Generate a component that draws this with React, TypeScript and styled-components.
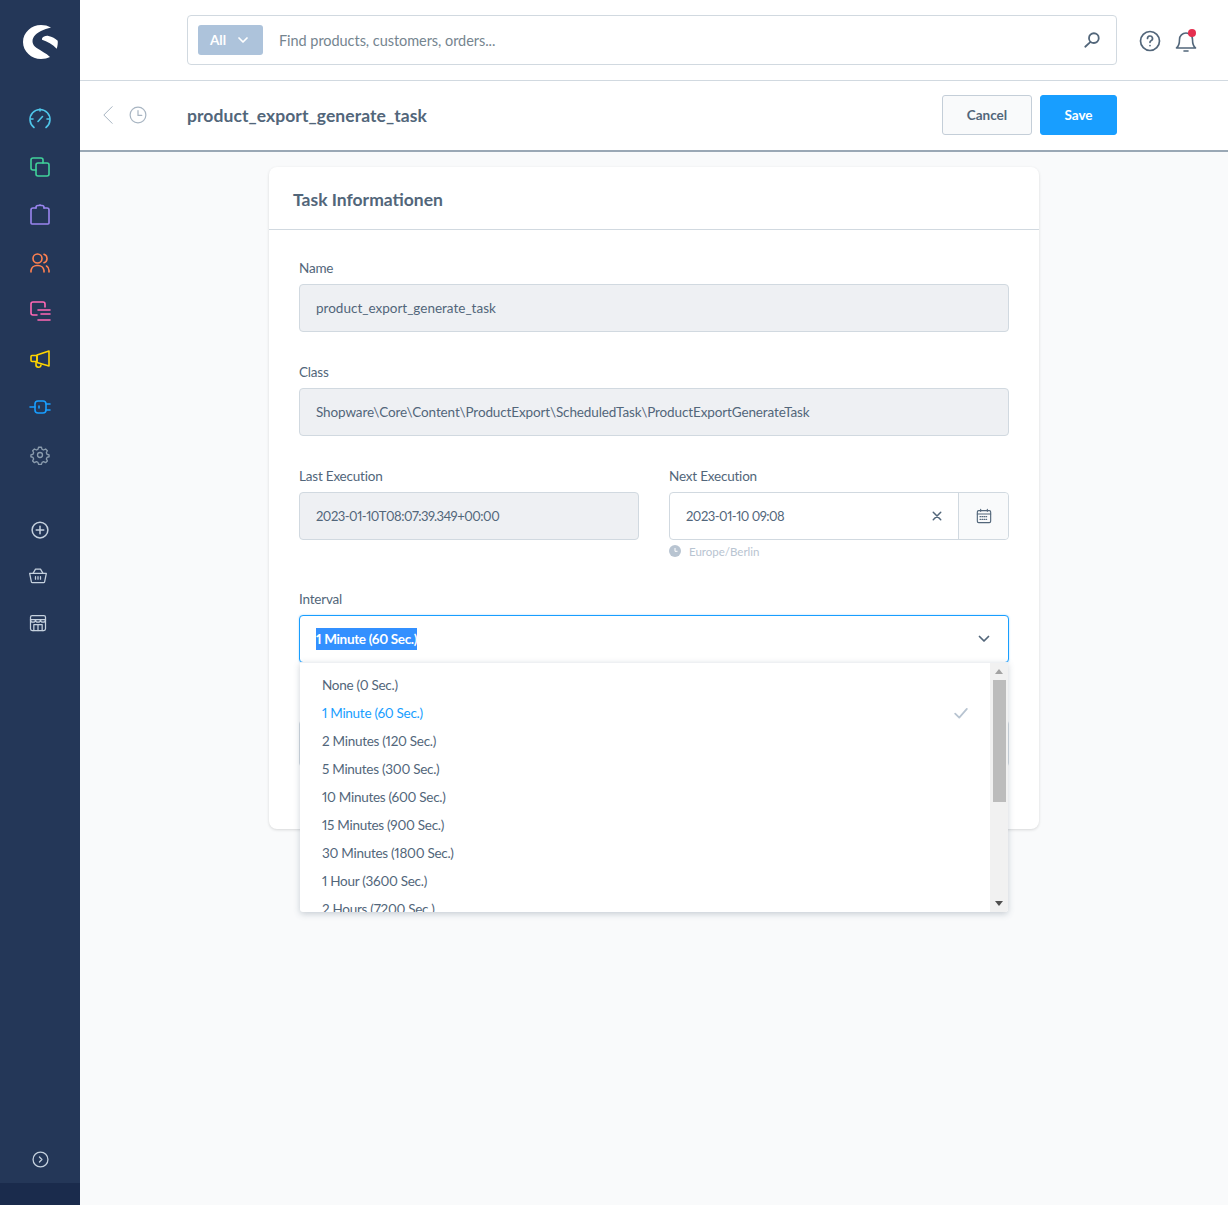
import React from 'react';
import styled, {createGlobalStyle} from 'styled-components';

const GlobalStyle = createGlobalStyle`
  html, body {
    margin: 0;
    padding: 0;
    height: 100%;
  }

  body {
    background: #f9fafb;
    font-family: Lato, "Noto Sans", sans-serif;
    font-variant-numeric: proportional-nums;
    color: #52667a;
  }

  * {
    box-sizing: border-box;
  }
`;

const Page = styled.div`
  display: flex;
  width: 1228px;
  height: 1205px;
  overflow: hidden;
`;

const Sidebar = styled.aside`
  display: flex;
  flex-direction: column;
  flex: 0 0 80px;
  width: 80px;
  background: #243758;
`;

const LogoWrap = styled.div`
  display: flex;
  justify-content: center;
  align-items: center;
  height: 83px;
`;

const NavMain = styled.nav`
  display: flex;
  flex-direction: column;
  align-items: center;
  padding-top: 12px;
`;

const NavItem = styled.div<{$color:string, $height?:number, $shift?:number}>`
  display: flex;
  justify-content: center;
  align-items: center;
  width: 80px;
  height: ${props => props.$height ?? 48}px;
  padding-right: ${props => props.$shift ?? 0}px;
  color: ${props => props.$color};
`;

const NavExtra = styled.nav`
  display: flex;
  flex-direction: column;
  align-items: center;
  padding-top: 30px;
`;

const SideFoot = styled.div`
  display: flex;
  justify-content: center;
  align-items: center;
  margin-top: auto;
  height: 48px;
  color: #c5d1de;
`;

const SideBottom = styled.div`
  height: 22px;
  background: #1a2b4c;
`;

const Main = styled.main`
  display: flex;
  flex-direction: column;
  flex: 1;
  min-width: 0;
`;

const TopBar = styled.header`
  display: flex;
  align-items: center;
  height: 81px;
  padding-left: 107px;
  background: #fff;
  border-bottom: 1px solid #d1d9e0;
`;

const SearchBox = styled.div`
  display: flex;
  align-items: center;
  width: 930px;
  height: 50px;
  padding: 0 15px 0 10px;
  border: 1px solid #d1d9e0;
  border-radius: 4px;
  color: #52667a;
`;

const TypeButton = styled.div`
  display: flex;
  align-items: center;
  justify-content: space-between;
  width: 65px;
  height: 30px;
  padding: 0 14px 0 12px;
  background: #adc3db;
  border-radius: 3px;
  color: #fff;
  font-size: 13.5px;
  font-weight: 700;
`;

const SearchPlaceholder = styled.span`
  flex: 1;
  margin-left: 16px;
  font-size: 14.5px;
  letter-spacing: -0.05px;
  color: #75858f;
`;

const TopIcons = styled.div`
  display: flex;
  align-items: center;
  gap: 12px;
  margin-left: 21px;
  padding-top: 1px;
  color: #52667a;
`;

const BellWrap = styled.div`
  position: relative;
  display: flex;
`;

const BellDot = styled.span`
  position: absolute;
  top: 0;
  right: 2px;
  width: 8px;
  height: 8px;
  border-radius: 50%;
  background: #e52f4f;
`;

const SmartBar = styled.div`
  display: flex;
  align-items: center;
  height: 71px;
  padding: 0 111px 1px 18px;
  background: #fff;
  border-bottom: 2px solid #9aa8b5;
`;

const BackIcons = styled.div`
  display: flex;
  align-items: center;
  gap: 11px;
  width: 89px;
  color: #a8b5c2;
`;

const Title = styled.h1`
  flex: 1;
  margin: 0;
  font-size: 17.5px;
  font-weight: 700;
  letter-spacing: 0.07px;
  color: #52667a;
`;

const Actions = styled.div`
  display: flex;
  gap: 8px;
`;

const Button = styled.button<{$primary?:boolean}>`
  height: 40px;
  width: ${props => props.$primary ? '77px' : '90px'};
  border-radius: 3px;
  border: 1px solid ${props => props.$primary ? '#189eff' : '#c4ced8'};
  background: ${props => props.$primary ? '#189eff' : '#f9fafb'};
  color: ${props => props.$primary ? '#fff' : '#52667a'};
  font-family: inherit;
  font-size: 13.5px;
  font-weight: 700;
`;

const Content = styled.div`
  display: flex;
  justify-content: center;
  flex: 1;
  padding-top: 15px;
  background: #f9fafb;
`;

const Card = styled.section`
  width: 770px;
  height: 662px;
  background: #fff;
  border-radius: 8px;
  box-shadow: 0 1px 3px rgba(0, 0, 0, 0.14);
`;

const CardTitle = styled.h2`
  display: flex;
  align-items: center;
  height: 63px;
  margin: 0;
  padding: 3px 0 0 24px;
  border-bottom: 1px solid #d1d9e0;
  font-size: 17.5px;
  font-weight: 700;
  color: #52667a;
`;

const CardBody = styled.div`
  display: flex;
  flex-direction: column;
  padding: 30px 30px 0;
`;

const Field = styled.div`
  display: flex;
  flex-direction: column;
  position: relative;
  margin-bottom: 32px;
`;

const FieldRow = styled.div`
  display: grid;
  grid-template-columns: 340px 340px;
  gap: 30px;
`;

const Label = styled.label`
  height: 16px;
  margin-bottom: 8px;
  line-height: 16px;
  font-size: 13.5px;
  letter-spacing: -0.2px;
  color: #52667a;
`;

const InputBox = styled.div<{$disabled?:boolean, $spacing?:number}>`
  display: flex;
  align-items: center;
  height: 48px;
  padding: 0 0 1px 16px;
  border: 1px solid #d1d9e0;
  border-radius: 4px;
  background: ${props => props.$disabled ? '#eef0f3' : '#fff'};
  font-size: 13.5px;
  letter-spacing: ${props => props.$spacing ?? 0}px;
  color: #52667a;
`;

const DateText = styled.span`
  font-size: 13px;
  letter-spacing: -0.5px;
`;

const ClearButton = styled.span`
  display: flex;
  margin-left: auto;
  margin-right: 16px;
  color: #52667a;
`;

const CalendarAddon = styled.span`
  display: flex;
  justify-content: center;
  align-items: center;
  align-self: stretch;
  width: 50px;
  margin-bottom: -1px;
  background: #f9fafb;
  border-left: 1px solid #d1d9e0;
  border-radius: 0 4px 4px 0;
  color: #52667a;
`;

const Hint = styled.div`
  display: flex;
  align-items: center;
  gap: 8px;
  height: 12px;
  margin: 5px 0 2px;
  font-size: 11.5px;
  color: #b8c4d1;
`;

const SelectBox = styled(InputBox)`
  border-color: #189eff;
  justify-content: space-between;
  padding: 0 18px 0 16px;
  box-shadow: 0 0 2px rgba(24, 158, 255, 0.4);
`;

const SelectedText = styled.span`
  background: #3390ff;
  color: #fff;
  line-height: 22px;
  font-weight: 700;
  letter-spacing: -0.33px;
`;

const HiddenField = styled.div`
  height: 47px;
  margin-top: 57px;
  border: 1px solid #d1d9e0;
  border-radius: 4px;
  background: #fff;
`;

const Dropdown = styled.div`
  position: absolute;
  top: 71px;
  left: 1px;
  display: flex;
  width: 708px;
  height: 250px;
  background: #fff;
  border-top: 1px solid #eef0f3;
  border-radius: 0 0 3px 3px;
  box-shadow: 0 2px 6px rgba(82, 102, 122, 0.3);
  overflow: hidden;
`;

const OptionList = styled.ul`
  flex: 1;
  margin: 0;
  padding: 8px 0 0;
  list-style: none;
  overflow: hidden;
`;

const Option = styled.li<{$active?:boolean}>`
  display: flex;
  align-items: center;
  justify-content: space-between;
  height: 28px;
  padding: 0 22px;
  font-size: 13.5px;
  letter-spacing: -0.28px;
  color: ${props => props.$active ? '#189eff' : '#52667a'};
`;

const CheckMark = styled.span`
  display: flex;
  color: #b8c4d1;
`;

const ScrollTrack = styled.div`
  display: flex;
  flex-direction: column;
  align-items: center;
  flex: 0 0 18px;
  background: #f1f1f1;
`;

const ScrollArrow = styled.div<{$down?:boolean}>`
  display: flex;
  justify-content: center;
  align-items: center;
  flex: 0 0 17px;
  color: ${props => props.$down ? '#505050' : '#a3a3a3'};
`;

const ScrollThumb = styled.div`
  width: 13px;
  height: 122px;
  background: #bcbcbc;
`;

const ScrollSpacer = styled.div`
  flex: 1;
`;

const Svg = ({size = 24, w = 1.6, children}:{size?:number, w?:number, children:React.ReactNode}) =>
    <svg width={size} height={size} viewBox="0 0 24 24" fill="none" stroke="currentColor"
        strokeWidth={w} strokeLinecap="round" strokeLinejoin="round">
        {children}
    </svg>;

const navIcons:{color:string, size?:number, icon:React.ReactNode}[] = [
    {color: '#4fc6ea', icon: <><path d="M6 20.5a10 10 0 1 1 12 0"/><path d="M10 14.5l4.5-5"/><path d="M12 2v2M3 12h2M19 12h2"/></>},
    {color: '#40d29a', icon: <><rect x="8" y="8" width="13" height="13" rx="2"/><path d="M8 15H5a2 2 0 0 1-2-2V5a2 2 0 0 1 2-2h8a2 2 0 0 1 2 2v3"/></>},
    {color: '#9a85f0', icon: <><path d="M8 5H5a2 2 0 0 0-2 2v13a1 1 0 0 0 1 1h16a1 1 0 0 0 1-1V7a2 2 0 0 0-2-2h-3"/><path d="M8 5V4.500a2 2 0 0 1 2-2h1l1-.5 1 .5h1a2 2 0 0 1 2 2V5"/></>},
    {color: '#ff8150', icon: <><circle cx="9.500" cy="7.500" r="4.500"/><path d="M3 21v-1.500a6 6 0 0 1 6-5h1a6 6 0 0 1 6 5V21"/><path d="M16 3.200a4.500 4.500 0 0 1 0 8.500M21 21v-1.500c0-2-1-3.600-2.500-4.500"/></>},
    {color: '#ff68b4', icon: <><path d="M9 16H5a2 2 0 0 1-2-2V5a2 2 0 0 1 2-2h10a2 2 0 0 1 2 2v3"/><path d="M10 11h12M13 15h9M10 21h12"/></>},
    {color: '#ffd500', icon: <><path d="M21 4v15L9 15.500V8z"/><rect x="3" y="8.500" width="6" height="6" rx="1"/><path d="M8 15.500v2a2.500 2.500 0 0 0 5 .5"/></>},
    {color: '#189eff', icon: <><rect x="7" y="6" width="11" height="12" rx="3"/><path d="M2 12h5M18 9h4M18 15h4M11 11v2"/></>},
    {color: '#8a9bad', size: 20, icon: <><circle cx="12" cy="12" r="3"/><path d="M12 2.500l1.700.2.8 2.500 1.800.8 2.400-1.200 2.100 2.100-1.200 2.400.8 1.800 2.500.8v2.200l-2.500.8-.8 1.800 1.200 2.400-2.100 2.100-2.400-1.200-1.800.8-.8 2.500h-3.400l-.8-2.500-1.800-.8-2.400 1.200-2.100-2.100 1.200-2.400-.8-1.800-2.500-.8v-2.200l2.500-.8.8-1.800-1.200-2.400 2.100-2.100 2.400 1.200 1.800-.8.8-2.500z"/></>}
];

const options = [
    'None (0 Sec.)',
    '1 Minute (60 Sec.)',
    '2 Minutes (120 Sec.)',
    '5 Minutes (300 Sec.)',
    '10 Minutes (600 Sec.)',
    '15 Minutes (900 Sec.)',
    '30 Minutes (1800 Sec.)',
    '1 Hour (3600 Sec.)',
    '2 Hours (7200 Sec.)'
];

export default function App() {
    return (
        <Page>
            <GlobalStyle/>
            <Sidebar>
                <LogoWrap>
                    <svg width="36" height="36" viewBox="0 0 36 36" fill="#fff">
                        <path d="M29 3.500C26 1.800 22.500 1 19 1 9.500 1 1 8.500 1 18c0 9.500 8.500 17 18 17 3.500 0 6.500-.8 9-2-4-4-9-6-13.300-9C10 21 9.500 16 12 12.500 15 8 22 5.500 29 3.500z"/>
                        <path d="M20 14.500c1-2 4-3 6.500-2.500 3.500.8 7 2.500 9.200 4.700.3 2.300-.2 5.800-1 8C31 20.500 25 17.500 20 15.700z"/>
                    </svg>
                </LogoWrap>
                <NavMain>
                    {navIcons.map(({color, size, icon}, i) =>
                        <NavItem key={i} $color={color}>
                            <Svg size={size}>{icon}</Svg>
                        </NavItem>)}
                </NavMain>
                <NavExtra>
                    <NavItem $color="#c5d1de" $height={42}>
                        <Svg size={18} w={2}><circle cx="12" cy="12" r="10.500"/><path d="M12 7v10M7 12h10"/></Svg>
                    </NavItem>
                    <NavItem $color="#c5d1de" $shift={4}>
                        <Svg size={20} w={1.500}><path d="M2 10h20l-2 10a1 1 0 0 1-1 1H5a1 1 0 0 1-1-1z"/><path d="M6 10l3-5h6l3 5M9 14v3M12 14v3M15 14v3"/></Svg>
                    </NavItem>
                    <NavItem $color="#c5d1de" $shift={4}>
                        <Svg size={20} w={1.500}><rect x="3" y="3" width="18" height="18" rx="2"/><path d="M3 8h18M3 8a3 3 0 0 0 6 0 3 3 0 0 0 6 0 3 3 0 0 0 6 0M7 21v-7h10v7M12 14v7"/></Svg>
                    </NavItem>
                </NavExtra>
                <SideFoot>
                    <Svg size={17} w={1.800}><circle cx="12" cy="12" r="10.500"/><path d="M10.500 8.500l3.500 3.500-3.500 3.500"/></Svg>
                </SideFoot>
                <SideBottom/>
            </Sidebar>
            <Main>
                <TopBar>
                    <SearchBox>
                        <TypeButton>
                            All
                            <Svg size={12} w={3.500}><path d="M4 8l8 8 8-8"/></Svg>
                        </TypeButton>
                        <SearchPlaceholder>Find products, customers, orders...</SearchPlaceholder>
                        <Svg size={18} w={2.400}><circle cx="14.500" cy="9.500" r="6.500"/><path d="M10 14.500L3 21"/></Svg>
                    </SearchBox>
                    <TopIcons>
                        <Svg size={24} w={1.700}><circle cx="12" cy="12" r="9.500"/><path d="M9.500 9.500a2.500 2.500 0 1 1 3.500 2.300c-.7.300-1 .7-1 1.500M12 16.500v.1"/></Svg>
                        <BellWrap>
                            <Svg size={24} w={1.600}><path d="M2.500 19c2-1.500 3-3 3-8.500a6.500 6.500 0 0 1 13 0c0 5.500 1 7 3 8.500z"/><path d="M10 22h4"/></Svg>
                            <BellDot/>
                        </BellWrap>
                    </TopIcons>
                </TopBar>
                <SmartBar>
                    <BackIcons>
                        <Svg size={20} w={1.200}><path d="M17 2L7 12l10 10"/></Svg>
                        <Svg size={18} w={1.600}><circle cx="12" cy="12" r="10.500"/><path d="M12 6v6.500h5"/></Svg>
                    </BackIcons>
                    <Title>product_export_generate_task</Title>
                    <Actions>
                        <Button>Cancel</Button>
                        <Button $primary>Save</Button>
                    </Actions>
                </SmartBar>
                <Content>
                    <Card>
                        <CardTitle>Task Informationen</CardTitle>
                        <CardBody>
                            <Field>
                                <Label>Name</Label>
                                <InputBox $disabled>product_export_generate_task</InputBox>
                            </Field>
                            <Field>
                                <Label>Class</Label>
                                <InputBox $disabled $spacing={-0.12}>Shopware\Core\Content\ProductExport\ScheduledTask\ProductExportGenerateTask</InputBox>
                            </Field>
                            <FieldRow>
                                <Field>
                                    <Label>Last Execution</Label>
                                    <InputBox $disabled><DateText>2023-01-10T08:07:39.349+00:00</DateText></InputBox>
                                </Field>
                                <Field>
                                    <Label>Next Execution</Label>
                                    <InputBox>
                                        <DateText>2023-01-10 09:08</DateText>
                                        <ClearButton>
                                            <Svg size={10} w={3.500}><path d="M3 3l18 18M21 3L3 21"/></Svg>
                                        </ClearButton>
                                        <CalendarAddon>
                                            <Svg size={16} w={1.700}>
                                                <rect x="2" y="4" width="20" height="18" rx="2"/>
                                                <path d="M2 9h20M7 2v3M17 2v3"/>
                                                <path d="M6 13h12M6 17h12" strokeDasharray="1 2"/>
                                            </Svg>
                                        </CalendarAddon>
                                    </InputBox>
                                    <Hint>
                                        <svg width="12" height="12" viewBox="0 0 12 12">
                                            <circle cx="6" cy="6" r="6" fill="#b8c4d1"/>
                                            <path d="M6 3v3.300h2.500" stroke="#fff" fill="none"/>
                                        </svg>
                                        Europe/Berlin
                                    </Hint>
                                </Field>
                            </FieldRow>
                            <Field>
                                <Label>Interval</Label>
                                <SelectBox>
                                    <SelectedText>1 Minute (60 Sec.)</SelectedText>
                                    <Svg size={12} w={3.500}><path d="M3 7l9 9 9-9"/></Svg>
                                </SelectBox>
                                <HiddenField/>
                                <Dropdown>
                                    <OptionList>
                                        {options.map((option, i) =>
                                            <Option key={option} $active={i === 1}>
                                                {option}
                                                {i === 1 &&
                                                    <CheckMark>
                                                        <Svg size={14} w={3}><path d="M2 13l7 7L22 5"/></Svg>
                                                    </CheckMark>}
                                            </Option>)}
                                    </OptionList>
                                    <ScrollTrack>
                                        <ScrollArrow>
                                            <svg width="8" height="5" viewBox="0 0 8 5"><path fill="currentColor" d="M4 0l4 5H0z"/></svg>
                                        </ScrollArrow>
                                        <ScrollThumb/>
                                        <ScrollSpacer/>
                                        <ScrollArrow $down>
                                            <svg width="8" height="5" viewBox="0 0 8 5"><path fill="currentColor" d="M0 0h8L4 5z"/></svg>
                                        </ScrollArrow>
                                    </ScrollTrack>
                                </Dropdown>
                            </Field>
                        </CardBody>
                    </Card>
                </Content>
            </Main>
        </Page>
    );
}
